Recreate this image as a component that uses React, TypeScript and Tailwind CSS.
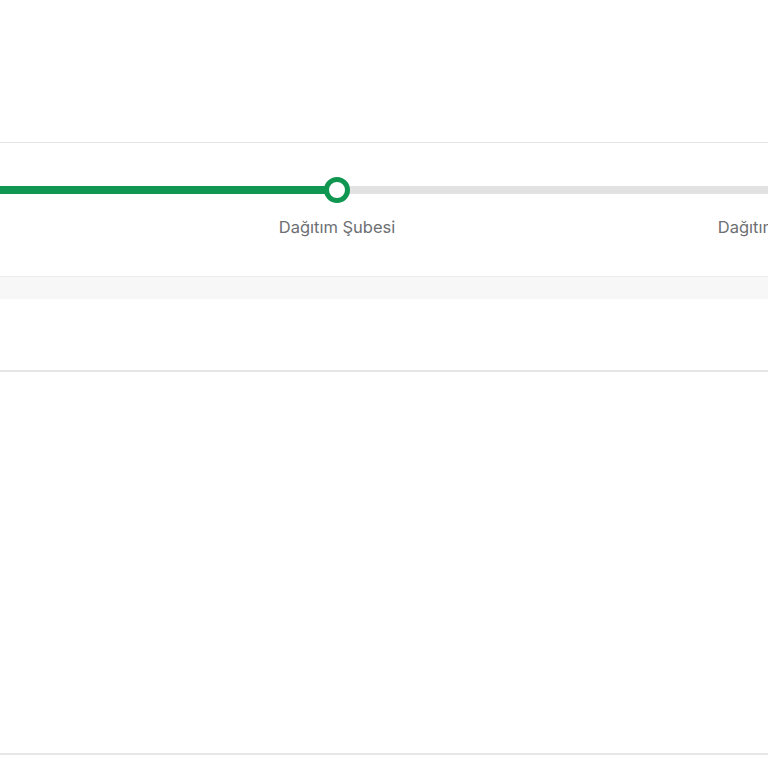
import React, { FC } from "react";

const steps = ["", "Dağıtım Şubesi", "Dağıtımda"];

const ShipmentTracker: FC = () => {
  return (
    <section className="w-full bg-white border-t border-[#e4e4e4]">
      <div className="w-full overflow-hidden">
        <div className="-ml-[293px] w-[1260px] pt-[43px] pb-[39px]">
          {/* track */}
          <div className="relative h-[8px] w-full bg-[#e2e2e2]">
            <div className="h-full w-1/2 bg-[#0f9650]" />
            <div className="absolute left-1/2 top-1/2 -translate-x-1/2 -translate-y-1/2 w-[26px] h-[26px] rounded-full border-[5px] border-[#0f9650] bg-white" />
          </div>
          {/* labels */}
          <div className="grid grid-cols-3 mt-[23px]">
            {steps.map((s, i) => (
              <p
                key={i}
                className="text-center text-[16.5px] leading-[20px] text-[#6d6f73]"
              >
                {s}
              </p>
            ))}
          </div>
        </div>
      </div>
      <div className="h-[23px] bg-[#f7f7f7] border-t border-[#ececec]" />
    </section>
  );
};

const App: FC = () => {
  return (
    <div
      className="w-full min-h-[768px] bg-white"
      style={{ fontFamily: "Inter, 'Noto Sans', sans-serif" }}
    >
      <div className="h-[142px]" />
      <ShipmentTracker />
      <div className="h-[71px] bg-white" />
      <div className="h-[383px] bg-white border-t-2 border-[#e6e6e6]" />
      <div className="h-[20px] bg-white border-t-2 border-[#e6e6e6]" />
    </div>
  );
};

export default App;
